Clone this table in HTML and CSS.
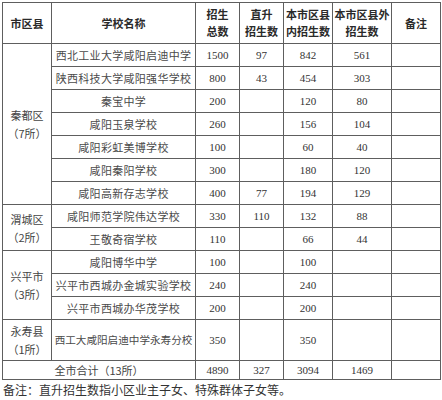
FILE: index.html
```html
<!DOCTYPE html>
<html lang="zh-CN">
<head>
<meta charset="utf-8">
<link rel="stylesheet" href="styles.css">
</head>
<body>
<table class="plan">
  <colgroup>
    <col class="c1"><col class="c2"><col class="c3"><col class="c4"><col class="c5"><col class="c6"><col class="c7">
  </colgroup>
  <thead>
    <tr class="head">
      <th>市区县</th>
      <th>学校名称</th>
      <th>招生<br>总数</th>
      <th>直升<br>招生数</th>
      <th>本市区县<br>内招生数</th>
      <th>本市区县外<br>招生数</th>
      <th>备注</th>
    </tr>
  </thead>
  <tbody>
    <tr>
      <td class="dist" rowspan="7">秦都区<br>（7所）</td>
      <td class="school">西北工业大学咸阳启迪中学</td>
      <td class="num">1500</td><td class="num">97</td><td class="num">842</td><td class="num">561</td><td></td>
    </tr>
    <tr>
      <td class="school">陕西科技大学咸阳强华学校</td>
      <td class="num">800</td><td class="num">43</td><td class="num">454</td><td class="num">303</td><td></td>
    </tr>
    <tr>
      <td class="school">秦宝中学</td>
      <td class="num">200</td><td class="num"></td><td class="num">120</td><td class="num">80</td><td></td>
    </tr>
    <tr>
      <td class="school">咸阳玉泉学校</td>
      <td class="num">260</td><td class="num"></td><td class="num">156</td><td class="num">104</td><td></td>
    </tr>
    <tr>
      <td class="school">咸阳彩虹美博学校</td>
      <td class="num">100</td><td class="num"></td><td class="num">60</td><td class="num">40</td><td></td>
    </tr>
    <tr>
      <td class="school">咸阳秦阳学校</td>
      <td class="num">300</td><td class="num"></td><td class="num">180</td><td class="num">120</td><td></td>
    </tr>
    <tr>
      <td class="school">咸阳高新存志学校</td>
      <td class="num">400</td><td class="num">77</td><td class="num">194</td><td class="num">129</td><td></td>
    </tr>
    <tr>
      <td class="dist" rowspan="2">渭城区<br>（2所）</td>
      <td class="school">咸阳师范学院伟达学校</td>
      <td class="num">330</td><td class="num">110</td><td class="num">132</td><td class="num">88</td><td></td>
    </tr>
    <tr>
      <td class="school">王敬奇宿学校</td>
      <td class="num">110</td><td class="num"></td><td class="num">66</td><td class="num">44</td><td></td>
    </tr>
    <tr>
      <td class="dist" rowspan="3">兴平市<br>（3所）</td>
      <td class="school">咸阳博华中学</td>
      <td class="num">100</td><td class="num"></td><td class="num">100</td><td class="num"></td><td></td>
    </tr>
    <tr>
      <td class="school">兴平市西城办金城实验学校</td>
      <td class="num">240</td><td class="num"></td><td class="num">240</td><td class="num"></td><td></td>
    </tr>
    <tr>
      <td class="school">兴平市西城办华茂学校</td>
      <td class="num">200</td><td class="num"></td><td class="num">200</td><td class="num"></td><td></td>
    </tr>
    <tr class="tall">
      <td class="dist">永寿县<br>（1所）</td>
      <td class="school tight">西工大咸阳启迪中学永寿分校</td>
      <td class="num">350</td><td class="num"></td><td class="num">350</td><td class="num"></td><td></td>
    </tr>
    <tr class="total">
      <td class="dist" colspan="2">全市合计（13所）</td>
      <td class="num">4890</td><td class="num">327</td><td class="num">3094</td><td class="num">1469</td><td></td>
    </tr>
  </tbody>
</table>
<p class="note">备注：直升招生数指小区业主子女、特殊群体子女等。</p>
</body>
</html>
```

FILE: styles.css
```css
html, body {
  margin: 0;
  padding: 0;
  background: #ffffff;
}
body {
  padding: 2px 0 0 2px;
  font-family: "Noto Sans CJK SC", "Noto Sans", sans-serif;
  color: #333;
}
.plan {
  border-collapse: collapse;
  table-layout: fixed;
  width: 439px;
}
.plan th, .plan td {
  border: 1px solid #5e5e5e;
  padding: 0;
  text-align: center;
  vertical-align: middle;
  overflow: hidden;
  white-space: nowrap;
}
.c1 { width: 49px; }
.c2 { width: 144px; }
.c3 { width: 44px; }
.c4 { width: 44px; }
.c5 { width: 49px; }
.c6 { width: 59px; }
.c7 { width: 49px; }
.head th {
  height: 40px;
  font-size: 11px;
  line-height: 17px;
  font-weight: bold;
  color: #2a2a2a;
}
.plan tbody td {
  height: 22px;
  font-size: 11px;
  line-height: 14px;
}
.school {
  color: #4a4a4a;
  letter-spacing: 0.3px;
}
.plan tbody td.tight {
  font-size: 10.6px;
  letter-spacing: 0;
}
.num {
  font-family: "Liberation Serif", "DejaVu Serif", serif;
  font-size: 11.5px;
  color: #333;
}
.plan tbody td.dist {
  color: #444;
  line-height: 18px;
  font-size: 11px;
}
.plan tbody .tall td {
  height: 40px;
}
.plan tbody .total td {
  height: 18px;
}
.note {
  margin: 0;
  padding: 1px 0 0 1px;
  font-size: 12px;
  line-height: 17px;
  color: #333;
}
```
